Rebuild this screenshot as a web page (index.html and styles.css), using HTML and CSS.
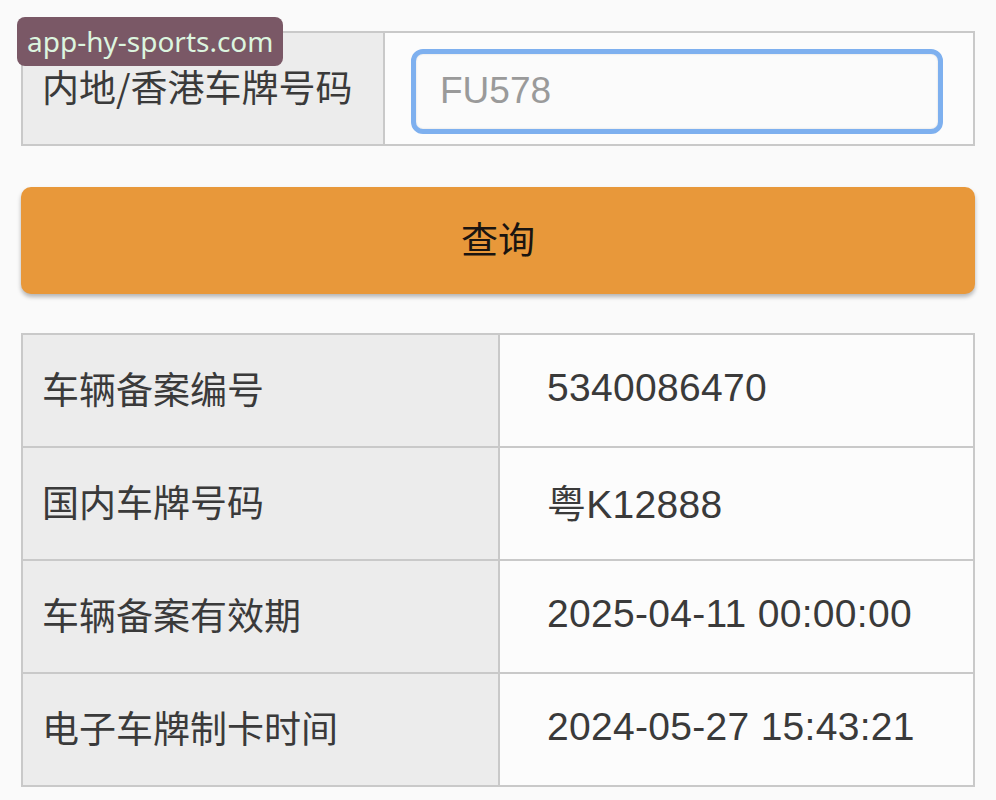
FILE: index.html
```html
<!DOCTYPE html>
<html lang="zh-CN">
<head>
<meta charset="utf-8">
<title>车辆查询</title>
<link rel="stylesheet" href="styles.css">
</head>
<body>
<div class="page">
  <table class="form">
    <tr>
      <th class="label">内地/香港车牌号码</th>
      <td class="inputcell"><div class="input"><span class="placeholder">FU578</span></div></td>
    </tr>
  </table>
  <div class="btn">查询</div>
  <table class="result">
    <tr><th class="rlabel">车辆备案编号</th><td class="rvalue">5340086470</td></tr>
    <tr><th class="rlabel">国内车牌号码</th><td class="rvalue">粤K12888</td></tr>
    <tr><th class="rlabel">车辆备案有效期</th><td class="rvalue">2025-04-11 00:00:00</td></tr>
    <tr><th class="rlabel">电子车牌制卡时间</th><td class="rvalue">2024-05-27 15:43:21</td></tr>
  </table>
</div>
<div class="watermark">app-hy-sports.com</div>
</body>
</html>
```
FILE: styles.css
```css
* { box-sizing: border-box; }
html, body { margin: 0; padding: 0; }
body {
  background: #fafafa;
  font-family: "Noto Sans CJK SC", "Noto Sans", sans-serif;
  color: #333;
  width: 996px;
  height: 800px;
  overflow: hidden;
  position: relative;
}
.page {
  padding: 31px 21px 0 21px;
}
table {
  border-collapse: collapse;
  width: 954px;
}
th, td {
  border: 2px solid #c9c9c9;
  padding: 0;
  font-weight: normal;
  text-align: left;
}
.form tr { height: 113px; }
.label {
  width: 362px;
  background: #ececec;
  padding: 0 0 6px 19px;
  font-size: 37px;
  color: #3a3a3a;
  vertical-align: middle;
  white-space: nowrap;
}
.inputcell {
  background: #fcfcfc;
  padding: 15px 30px 9px 26px;
}
.input {
  height: 85px;
  border: 5px solid #7eb0ef;
  border-radius: 12px;
  background: #fbfbfb;
  display: flex;
  align-items: center;
  padding: 0 0 2px 24px;
  box-shadow: inset 0 0 2px rgba(0,0,0,0.15);
}
.placeholder {
  font-family: "Liberation Sans", "Noto Sans", sans-serif;
  font-size: 37px;
  color: #9a9a9a;
}
.btn {
  margin-top: 41px;
  height: 107px;
  border-radius: 10px;
  background: #e8983a;
  box-shadow: 0 3px 4px rgba(0,0,0,0.28);
  display: flex;
  align-items: center;
  justify-content: center;
  padding-bottom: 6px;
  font-size: 37px;
  color: #1a1410;
}
.result { margin-top: 39px; }
.result tr { height: 113px; }
.rlabel {
  width: 477px;
  background: #ececec;
  padding: 0 0 6px 19px;
  font-size: 37px;
  color: #3a3a3a;
}
.rvalue {
  background: #fcfcfc;
  padding: 0 0 6px 47px;
  font-family: "Liberation Sans", "Noto Sans CJK SC", sans-serif;
  font-size: 39px;
  letter-spacing: 0.3px;
  color: #3a3a3a;
}
.watermark {
  position: absolute;
  left: 17px;
  top: 17px;
  width: 266px;
  height: 49px;
  border-radius: 8px;
  background: #7a5866;
  color: #dcf5df;
  font-family: "Noto Sans", sans-serif;
  font-size: 28px;
  line-height: 49px;
  padding-left: 10px;
  white-space: nowrap;
}
```
